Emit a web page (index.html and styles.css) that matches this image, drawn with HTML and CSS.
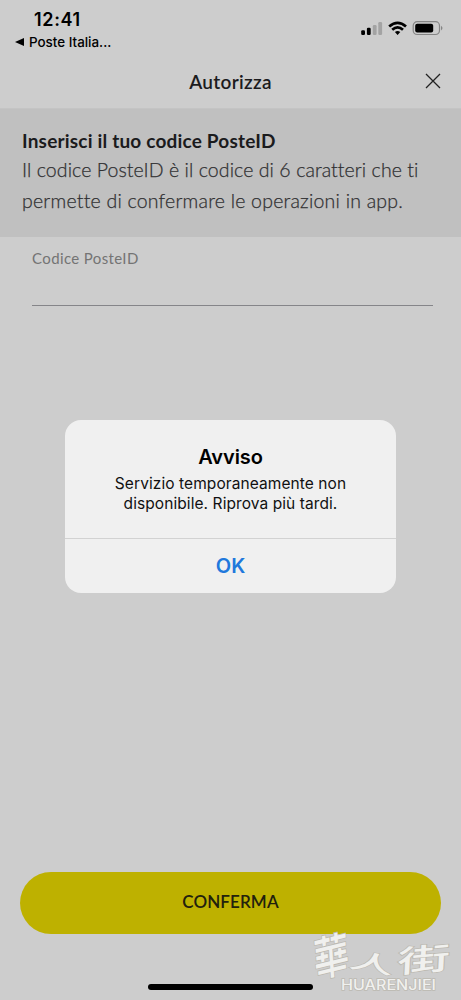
FILE: index.html
```html
<!DOCTYPE html>
<html lang="it">
<head>
<meta charset="utf-8">
<meta name="viewport" content="width=device-width, initial-scale=1">
<title>Autorizza</title>
<link rel="stylesheet" href="styles.css">
</head>
<body>
<div class="screen">
  <div class="status">
    <div class="status-left">
      <div class="time">12:41</div>
      <div class="back"><svg width="9" height="8" viewBox="0 0 9 8"><path d="M0 4 9 0V8Z"/></svg><span>Poste Italia...</span></div>
    </div>
    <svg class="status-icons" width="84" height="16" viewBox="0 0 84 16">
      <rect x="0.2" y="9.2" width="3.8" height="4.8" rx="1.2"/>
      <rect x="5.9" y="6.7" width="3.8" height="7.3" rx="1.2"/>
      <rect x="11.8" y="4" width="3.8" height="10" rx="1.2" fill="#a3a3a3"/>
      <rect x="17.3" y="1" width="3.8" height="13" rx="1.2" fill="#a3a3a3"/>
      <g fill="none" stroke="#000" stroke-width="2.7">
        <path d="M28.2 5.6Q36.6-2 45 5.6"/>
        <path d="M31.2 8.8Q36.6 3.8 42 8.8"/>
      </g>
      <path d="M33.9 11Q36.6 8.8 39.3 11L36.6 13.9Z"/>
      <rect x="52.2" y="0.7" width="26.3" height="12.8" rx="4" fill="none" stroke="#858585" stroke-width="1.2"/>
      <rect x="54.2" y="2.7" width="18" height="8.9" rx="2"/>
      <path d="M80 4.8Q83 7.1 80 9.4Z" fill="#858585"/>
    </svg>
  </div>
  <header class="header">
    <h1>Autorizza</h1>
    <svg class="close" width="16" height="16" viewBox="0 0 16 16"><path d="M1 1 15 15M15 1 1 15" fill="none" stroke="#222" stroke-width="1.3"/></svg>
  </header>
  <section class="intro">
    <h2>Inserisci il tuo codice PosteID</h2>
    <p><span class="first">Il codice PosteID è il codice di 6 caratteri che ti</span><br>permette di confermare le operazioni in app.</p>
  </section>
  <div class="field">Codice PosteID</div>
  <button class="confirm">CONFERMA</button>
  <div class="home"></div>
  <div class="dialog">
    <div class="message">
      <h3>Avviso</h3>
      <p>Servizio temporaneamente non<br>disponibile. Riprova più tardi.</p>
    </div>
    <button class="ok">OK</button>
  </div>
  <svg class="mark" width="150" height="70" viewBox="0 0 150 70">
    <g class="brush">
      <text transform="translate(4 48) rotate(-14) skewX(-10) scale(.9 1.15)" font-size="40">華</text>
      <text transform="translate(37 37) rotate(10) skewX(-12) scale(1.35 .66)" font-size="33">人</text>
      <text transform="translate(86 43) rotate(-5) skewX(-8) scale(1.65 .95)" font-size="32">街</text>
    </g>
    <text class="latin" x="30" y="60" textLength="95" lengthAdjust="spacingAndGlyphs">HUARENJIEI</text>
  </svg>
</div>
</body>
</html>
```
FILE: styles.css
```css
* { box-sizing: border-box; }
body { margin: 0; background: #cdcdcd; color: #1b1b1d; font-family: Lato, sans-serif; font-variant-ligatures: none; }
h1, h2, h3, p { margin: 0; }
button { border: 0; padding: 0; }
svg { display: block; }
.screen { position: relative; display: flex; flex-direction: column; width: 461px; height: 1000px; overflow: hidden; background: #cdcdcd; }
.status { display: flex; justify-content: space-between; height: 56px; padding: 9px 16px 0 15px; color: #000; font-family: Inter, sans-serif; }
.time { padding-left: 19px; font-size: 18px; line-height: 22px; font-weight: 600; letter-spacing: .65px; }
.back { display: flex; align-items: center; gap: 5px; height: 22px; font-size: 13.4px; font-weight: 500; white-space: nowrap; }
.status-icons { margin-top: 12px; }
.header { display: grid; grid-template-columns: 1fr auto 1fr; align-items: center; height: 53px; padding: 0 20px; border-bottom: 1px solid #c4c4c4; }
.header h1 { grid-column: 2; font-size: 19px; line-height: 24px; font-weight: 600; letter-spacing: .3px; }
.close { justify-self: end; margin-bottom: 3px; }
.intro { height: 128px; padding: 19px 22px 0; background: #c0c0c0; white-space: nowrap; }
.intro h2 { font-size: 19px; line-height: 25px; font-weight: 700; letter-spacing: .19px; }
.intro p { padding-top: 1px; font-size: 19.5px; line-height: 31px; font-weight: 300; letter-spacing: .22px; color: #303032; -webkit-text-stroke: .25px #303032; }
.first { letter-spacing: .08px; }
.field { height: 69px; margin: 0 28px 0 32px; padding-top: 11px; border-bottom: 1px solid #858589; font-size: 15px; line-height: 21px; letter-spacing: .38px; color: #747474; }
.confirm { height: 62px; margin: auto 20px 0; border-radius: 31px; background: #beb100; color: #22210d; font: 600 17px/60px Lato, sans-serif; padding-bottom: 2px; letter-spacing: .1px; }
.home { width: 165px; height: 6px; margin: 50px auto 10px; border-radius: 3px; background: #000; }
.dialog { position: absolute; left: 65px; top: 420px; width: 331px; height: 173px; display: flex; flex-direction: column; overflow: hidden; border-radius: 16px; background: #f0f0f0; color: #000; font-family: Inter, sans-serif; text-align: center; }
.message { height: 119px; padding-top: 24px; border-bottom: 1px solid #d2d2d2; }
.message h3 { font-size: 20px; line-height: 27px; font-weight: 600; letter-spacing: -.1px; }
.message p { padding-top: 3px; font-size: 15.5px; line-height: 20px; letter-spacing: .08px; color: #111; }
.ok { flex: 1; background: transparent; color: #2078dc; font: 600 20px/54px Inter, sans-serif; }
.mark { position: absolute; left: 311px; top: 930px; overflow: visible; fill: #f0f0ee; stroke: #bcb9b1; stroke-width: 1.4; paint-order: stroke; }
.brush { font-family: "Noto Sans CJK TC", sans-serif; font-weight: 500; }
.latin { font: 500 14px Inter, sans-serif; }
```
